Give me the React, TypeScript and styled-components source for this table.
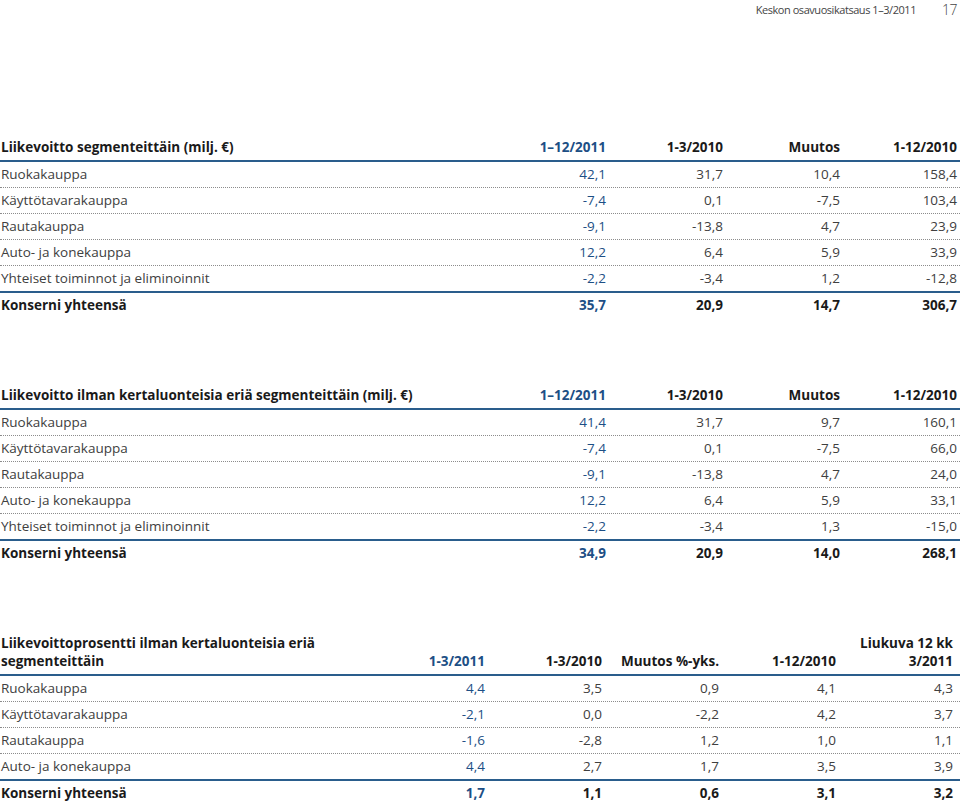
import React from "react";
import styled, { createGlobalStyle } from "styled-components";

const Global = createGlobalStyle`
  html, body { margin: 0; padding: 0; background: #fff; }
  body { font-family: "Open Sans", "Liberation Sans", sans-serif; color: #3a3a3a; }
`;

const Page = styled.div`
  width: 960px;
  box-sizing: border-box;
`;

const TopBar = styled.div`
  height: 18px;
  display: flex;
  justify-content: flex-end;
  align-items: center;
  gap: 26px;
  padding-right: 3px;
  font-size: 11px;
  letter-spacing: -0.45px;
  color: #444;
`;

const PageNo = styled.span`
  font-size: 14px;
  font-weight: 300;
  letter-spacing: -0.5px;
`;

const Table = styled.section<{ $top: number }>`
  margin-top: ${(p) => p.$top}px;
`;

const Row = styled.div<{ $cols: number; $line: "dot" | "solid" | "header" | "none" }>`
  display: grid;
  grid-template-columns: 1fr repeat(${(p) => p.$cols}, 117px);
  align-items: end;
  min-height: 25px;
  border-bottom: ${(p) =>
    p.$line === "dot"
      ? "1px dotted #8c8c8c"
      : p.$line === "none"
      ? "0"
      : "2px solid #2a5d8c"};
`;

const HeadRow = styled(Row)`
  min-height: 26px;
`;

const Cell = styled.div<{ $num?: boolean; $bold?: boolean; $blue?: boolean; $pad: number }>`
  font-size: 13.5px;
  line-height: 18px;
  padding: 0 ${(p) => (p.$num ? p.$pad : 0)}px 4px ${(p) => (p.$num ? 0 : 1)}px;
  text-align: ${(p) => (p.$num ? "right" : "left")};
  font-weight: ${(p) => (p.$bold ? 700 : 400)};
  color: ${(p) => (p.$blue ? "#1d4f85" : p.$bold ? "#1a1a1a" : "#404040")};
  white-space: nowrap;
`;

type TableData = {
  title: React.ReactNode;
  heads: React.ReactNode[];
  rows: [string, ...string[]][];
  total: [string, ...string[]];
};

function DataTable({ d, top, pad }: { d: TableData; top: number; pad: number }) {
  const cols = d.heads.length;
  return (
    <Table $top={top}>
      <HeadRow $cols={cols} $line="header">
        <Cell $bold $pad={pad}>{d.title}</Cell>
        {d.heads.map((h, i) => (
          <Cell key={i} $num $bold $blue={i === 0} $pad={pad}>
            {h}
          </Cell>
        ))}
      </HeadRow>
      {d.rows.map((r, ri) => (
        <Row key={ri} $cols={cols} $line={ri === d.rows.length - 1 ? "solid" : "dot"}>
          <Cell $pad={pad}>{r[0]}</Cell>
          {r.slice(1).map((v, i) => (
            <Cell key={i} $num $blue={i === 0} $pad={pad}>
              {v}
            </Cell>
          ))}
        </Row>
      ))}
      <Row $cols={cols} $line="none">
        <Cell $bold $pad={pad}>{d.total[0]}</Cell>
        {d.total.slice(1).map((v, i) => (
          <Cell key={i} $num $bold $blue={i === 0} $pad={pad}>
            {v}
          </Cell>
        ))}
      </Row>
    </Table>
  );
}

const t1: TableData = {
  title: "Liikevoitto segmenteittäin (milj. €)",
  heads: ["1–12/2011", "1-3/2010", "Muutos", "1-12/2010"],
  rows: [
    ["Ruokakauppa", "42,1", "31,7", "10,4", "158,4"],
    ["Käyttötavarakauppa", "-7,4", "0,1", "-7,5", "103,4"],
    ["Rautakauppa", "-9,1", "-13,8", "4,7", "23,9"],
    ["Auto- ja konekauppa", "12,2", "6,4", "5,9", "33,9"],
    ["Yhteiset toiminnot ja eliminoinnit", "-2,2", "-3,4", "1,2", "-12,8"],
  ],
  total: ["Konserni yhteensä", "35,7", "20,9", "14,7", "306,7"],
};

const t2: TableData = {
  title: "Liikevoitto ilman kertaluonteisia eriä segmenteittäin (milj. €)",
  heads: ["1–12/2011", "1-3/2010", "Muutos", "1-12/2010"],
  rows: [
    ["Ruokakauppa", "41,4", "31,7", "9,7", "160,1"],
    ["Käyttötavarakauppa", "-7,4", "0,1", "-7,5", "66,0"],
    ["Rautakauppa", "-9,1", "-13,8", "4,7", "24,0"],
    ["Auto- ja konekauppa", "12,2", "6,4", "5,9", "33,1"],
    ["Yhteiset toiminnot ja eliminoinnit", "-2,2", "-3,4", "1,3", "-15,0"],
  ],
  total: ["Konserni yhteensä", "34,9", "20,9", "14,0", "268,1"],
};

const t3: TableData = {
  title: (
    <>
      Liikevoittoprosentti ilman kertaluonteisia eriä
      <br />
      segmenteittäin
    </>
  ),
  heads: [
    "1-3/2011",
    "1-3/2010",
    "Muutos %-yks.",
    "1-12/2010",
    <>
      Liukuva 12 kk
      <br />
      3/2011
    </>,
  ],
  rows: [
    ["Ruokakauppa", "4,4", "3,5", "0,9", "4,1", "4,3"],
    ["Käyttötavarakauppa", "-2,1", "0,0", "-2,2", "4,2", "3,7"],
    ["Rautakauppa", "-1,6", "-2,8", "1,2", "1,0", "1,1"],
    ["Auto- ja konekauppa", "4,4", "2,7", "1,7", "3,5", "3,9"],
  ],
  total: ["Konserni yhteensä", "1,7", "1,1", "0,6", "3,1", "3,2"],
};

export default function App() {
  return (
    <Page>
      <Global />
      <TopBar>
        <span>Keskon osavuosikatsaus 1–3/2011</span>
        <PageNo>17</PageNo>
      </TopBar>
      <DataTable d={t1} top={116} pad={3} />
      <DataTable d={t2} top={64} pad={3} />
      <DataTable d={t3} top={68} pad={7} />
    </Page>
  );
}
